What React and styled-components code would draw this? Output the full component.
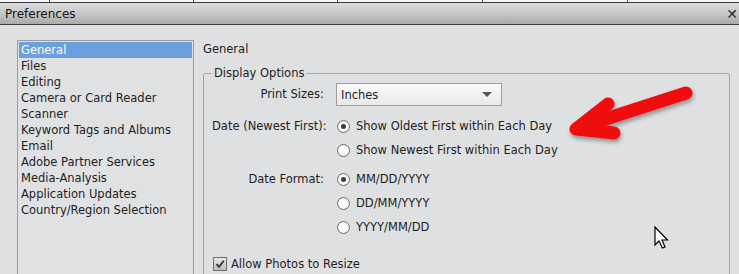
import React from 'react'
import styled, { createGlobalStyle } from 'styled-components'

const GlobalStyle = createGlobalStyle`
  body {
    margin: 0;
    background: #dfe0e2;
    font-family: "DejaVu Sans", Verdana, sans-serif;
    font-size: 11.5px;
    color: #1e1e1e;
    overflow: hidden;
  }
`;

const Window = styled.div`
  position: relative;
  width: 739px;
  height: 274px;
  overflow: hidden;
  background: #dfe0e2;
`;

const TopStrip = styled.div`
  display: flex;
  height: 2px;
  background: #f4f4f4;
  border-bottom: 1px solid #3a3a3a;
`;

const StripCell = styled.div`
  width: ${p => p.w}px;
  border-right: 1px solid #555;
  flex-shrink: 0;
`;

const TitleBar = styled.div`
  height: 21px;
  display: flex;
  align-items: center;
  justify-content: space-between;
  padding: 0 0 0 5px;
  background: linear-gradient(#dcdcdc, #c4c4c4 55%, #aaaaaa);
  border-bottom: 1px solid #3c3c3c;
  font-size: 12px;
  color: #141414;
`;

const CloseMark = styled.span`
  font-size: 14px;
  font-weight: bold;
  color: #2a2a2a;
  margin-right: 1px;
`;

const Body = styled.div`
  display: flex;
  padding: 15px 0 0 17px;
`;

const List = styled.ul`
  list-style: none;
  margin: 0;
  padding: 1px 1px 0;
  width: 173px;
  height: 260px;
  flex-shrink: 0;
  border: 1px solid #9c9c9c;
  background: #e0e1e3;
`;

const Item = styled.li`
  height: 16px;
  line-height: 16px;
  padding-left: 2px;
  background: ${p => (p.selected ? '#6b9fe0' : 'transparent')};
  color: ${p => (p.selected ? '#fff' : '#1e1e1e')};
`;

const Panel = styled.div`
  margin-left: 9px;
  width: 527px;
`;

const Heading = styled.div`
  height: 16px;
  line-height: 16px;
  margin-top: 1px;
`;

const Group = styled.fieldset`
  margin: 9px 0 0;
  padding: 0 0 0 8px;
  border: 1px solid #a6a6a6;
  border-radius: 2px;
  height: 240px;
  min-inline-size: 0;
`;

const Legend = styled.legend`
  padding: 0 2px;
  margin-left: 0;
  line-height: 15px;
`;

const Form = styled.div`
  display: grid;
  grid-template-columns: 112px auto;
  column-gap: 12px;
  margin-top: 2px;
`;

const Label = styled.div`
  text-align: right;
  white-space: nowrap;
  height: ${p => p.h || 24}px;
  line-height: ${p => p.h || 24}px;
  margin-top: ${p => p.top || 0}px;
`;

const Cell = styled.div`
  display: flex;
  flex-direction: column;
  margin-top: ${p => p.top || 0}px;
`;

const Select = styled.div`
  width: 166px;
  height: 23px;
  box-sizing: border-box;
  border: 1px solid #a0a0a0;
  background: linear-gradient(#fafafa, #e9e9e9);
  display: flex;
  align-items: center;
  justify-content: space-between;
  padding: 0 9px 0 4px;
`;

const Caret = styled.span`
  width: 0;
  height: 0;
  border-left: 5px solid transparent;
  border-right: 5px solid transparent;
  border-top: 5px solid #555;
`;

const Option = styled.div`
  display: flex;
  align-items: center;
  gap: 6px;
  height: 24px;
  white-space: nowrap;
`;

const Radio = styled.span`
  width: 11px;
  height: 11px;
  border-radius: 50%;
  border: 1px solid #6e6e6e;
  background: radial-gradient(circle, #ffffff 40%, #e4e4e4);
  display: flex;
  align-items: center;
  justify-content: center;
  margin-left: 1px;

  &::after {
    content: '';
    width: 5px;
    height: 5px;
    border-radius: 50%;
    background: ${p => (p.checked ? '#3c3c3c' : 'transparent')};
  }
`;

const CheckRow = styled.div`
  display: flex;
  align-items: center;
  gap: 4px;
  height: 24px;
  margin-top: 13px;
  margin-left: 1px;
`;

const Check = styled.span`
  width: 12px;
  height: 12px;
  border: 1px solid #6e6e6e;
  background: linear-gradient(#e8e8e8, #bdbdbd);
  display: flex;
  align-items: center;
  justify-content: center;
`;

const Overlay = styled.svg`
  position: absolute;
  left: 0;
  top: 0;
  pointer-events: none;
`;

const cells = [49, 143, 143, 144, 144, 200];
const items = [
  'General',
  'Files',
  'Editing',
  'Camera or Card Reader',
  'Scanner',
  'Keyword Tags and Albums',
  'Email',
  'Adobe Partner Services',
  'Media-Analysis',
  'Application Updates',
  'Country/Region Selection',
];

const RadioOption = ({ checked, children }) => (
  <Option>
    <Radio checked={checked} />
    <span>{children}</span>
  </Option>
);

const App = () => {
  return (
    <Window>
      <GlobalStyle />
      <TopStrip>
        {cells.map((w, i) => <StripCell key={i} w={w} />)}
      </TopStrip>
      <TitleBar>
        <span>Preferences</span>
        <CloseMark>✕</CloseMark>
      </TitleBar>

      <Body>
        <List>
          {items.map((t, i) => (
            <Item key={t} selected={i === 0}>{t}</Item>
          ))}
        </List>

        <Panel>
          <Heading>General</Heading>
          <Group>
            <Legend>Display Options</Legend>
            <Form>
              <Label h={23}>Print Sizes:</Label>
              <Cell>
                <Select>
                  <span>Inches</span>
                  <Caret />
                </Select>
              </Cell>

              <Label top={8}>Date (Newest First):</Label>
              <Cell top={8}>
                <RadioOption checked>Show Oldest First within Each Day</RadioOption>
                <RadioOption>Show Newest First within Each Day</RadioOption>
              </Cell>

              <Label top={5}>Date Format:</Label>
              <Cell top={5}>
                <RadioOption checked>MM/DD/YYYY</RadioOption>
                <RadioOption>DD/MM/YYYY</RadioOption>
                <RadioOption>YYYY/MM/DD</RadioOption>
              </Cell>
            </Form>
            <CheckRow>
              <Check>
                <svg width="10" height="10" viewBox="0 0 10 10">
                  <path d="M1.5 5 L4 7.8 L8.8 1.8" fill="none" stroke="#333" strokeWidth="1.8" />
                </svg>
              </Check>
              <span>Allow Photos to Resize</span>
            </CheckRow>
          </Group>
        </Panel>
      </Body>

      <Overlay width="739" height="274" viewBox="0 0 739 274">
        <defs>
          <filter id="shadow" x="-20%" y="-40%" width="140%" height="180%">
            <feDropShadow dx="1" dy="3" stdDeviation="2" floodColor="#000" floodOpacity="0.35" />
          </filter>
        </defs>
        <g filter="url(#shadow)" stroke="#f01010" strokeWidth="13" strokeLinecap="round" strokeLinejoin="round" fill="none">
          <path d="M686 93 L584 126" />
          <path d="M608 104 L576 129 L614 133" />
        </g>
        <path
          d="M655 227 L655 245 L659 241 L662.5 248 L665 247 L662 240 L667.5 240 Z"
          fill="#fff"
          stroke="#000"
          strokeWidth="1.2"
          strokeLinejoin="miter"
        />
      </Overlay>
    </Window>
  );
};

export default App;
